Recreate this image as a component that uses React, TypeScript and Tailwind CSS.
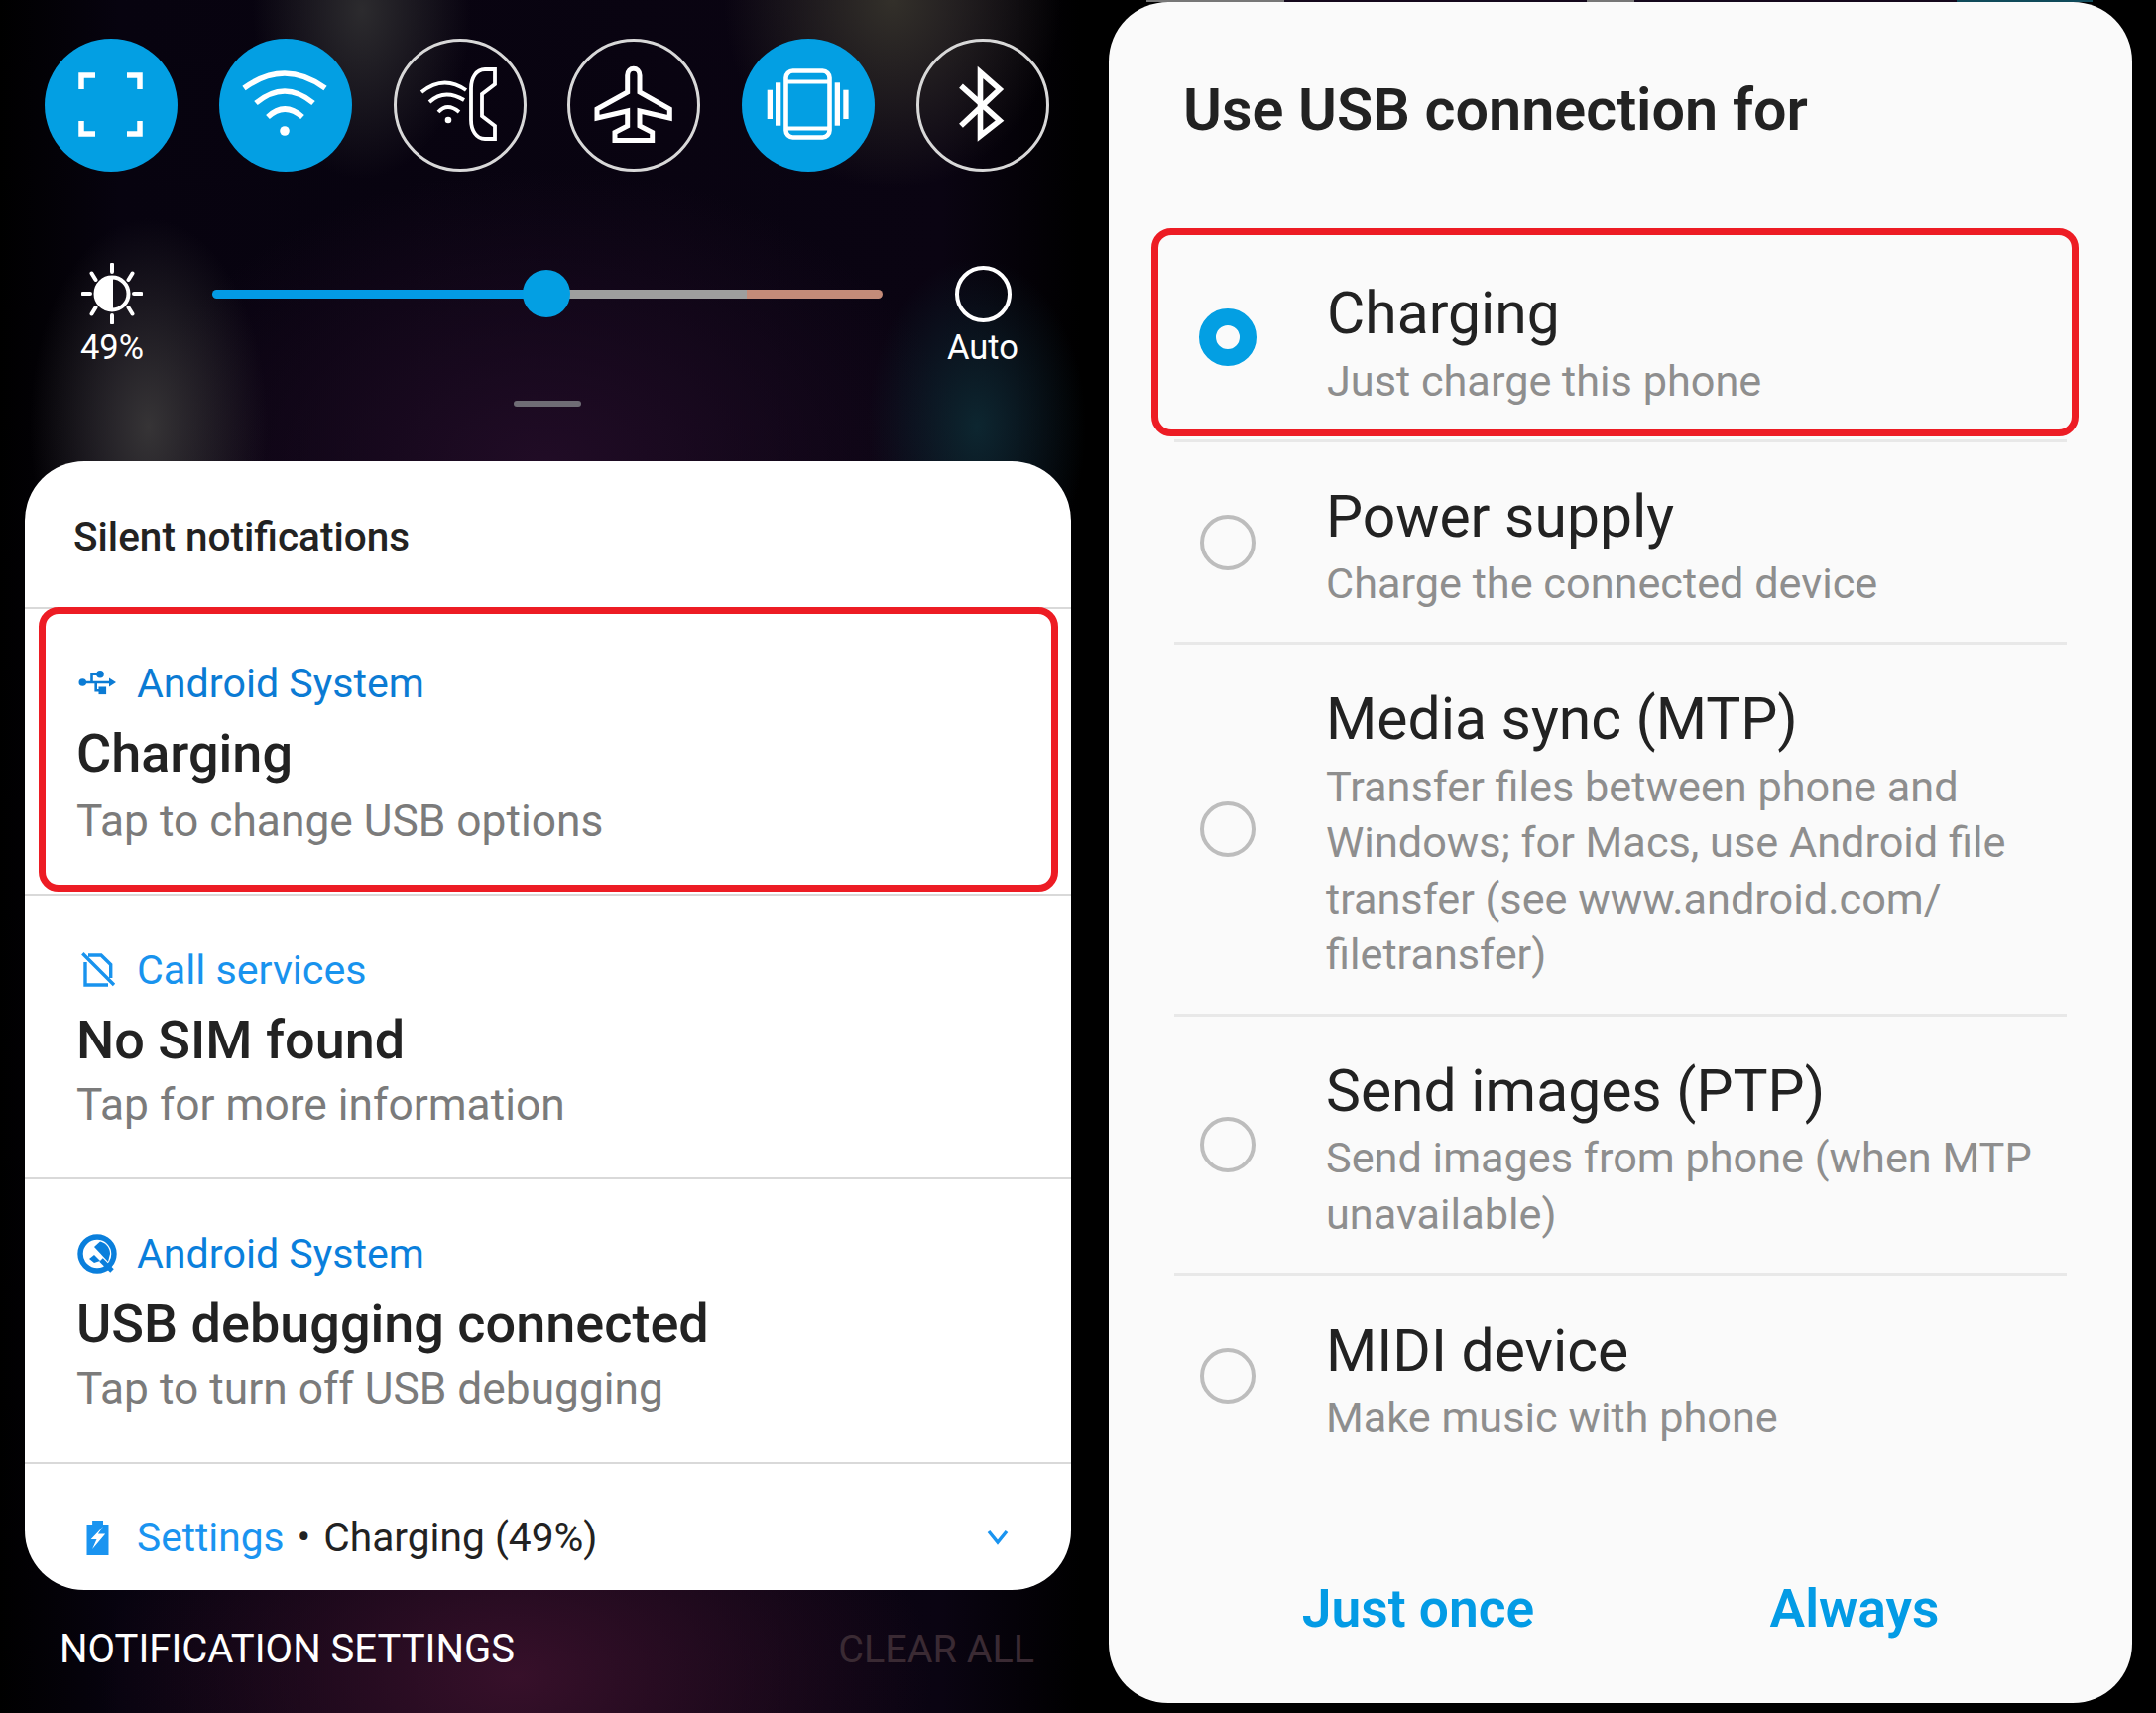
function ToggleCircle({ active, children }: { active?: boolean; children: React.ReactNode }) {
  return (
    <div
      className={
        active
          ? "h-[134px] w-[134px] rounded-full bg-[#039fe3]"
          : "h-[134px] w-[134px] rounded-full border-[3px] border-[#d8d8d8]"
      }
    >
      <svg
        viewBox="0 0 134 134"
        className={active ? "h-[134px] w-[134px]" : "-m-[3px] h-[134px] w-[134px]"}
        fill="none"
        stroke="#fff"
      >
        {children}
      </svg>
    </div>
  );
}

function Toggles() {
  return (
    <div className="ml-[45px] flex w-[1013px] justify-between pt-[39px]">
      <ToggleCircle active>
        <path
          d="M37 51V37H51M83 37H96V51M37 83V96H51M83 96H96V83"
          strokeWidth="5.5"
        />
      </ToggleCircle>
      <ToggleCircle active>
        <g strokeWidth="5.5">
          <path d="M25 50Q66 20 107 50" />
          <path d="M37 65Q66 41 95 65" />
          <path d="M49 79Q66 63 84 79" />
        </g>
        <circle cx="66" cy="93" r="4.8" fill="#fff" stroke="none" />
      </ToggleCircle>
      <ToggleCircle>
        <g strokeWidth="3.8">
          <path d="M28 54Q50 36 73 52" />
          <path d="M36 64Q51 50 71 62" />
          <path d="M45 74Q54 64 66 74" />
          <path d="M102 31H92C83 31 78 40 78 50V82C78 92 83 101 92 101H102V88L89 78V56L102 46Z" />
        </g>
        <circle cx="55" cy="82" r="3.3" fill="#fff" stroke="none" />
      </ToggleCircle>
      <ToggleCircle>
        <path
          d="M60.7 54L30 71V80L60.7 73V88L48 94.5V102.5H85.7V94.5L73 88V73L103.3 80V71L73 54V37C73 28 60.7 28 60.7 37Z"
          strokeWidth="5"
        />
      </ToggleCircle>
      <ToggleCircle active>
        <rect x="44.5" y="32.5" width="44" height="67" rx="7" strokeWidth="4.6" />
        <path d="M44 43.5H89M44 90.5H89" strokeWidth="4" />
        <g fill="#fff" stroke="none">
          <rect x="25.7" y="51.7" width="5.3" height="29.3" />
          <rect x="34" y="44.3" width="5.3" height="43.4" />
          <rect x="93.7" y="44.3" width="5.3" height="43.4" />
          <rect x="102.3" y="51.7" width="5.3" height="29.3" />
        </g>
      </ToggleCircle>
      <ToggleCircle>
        <path d="M45 47.7L84 82.7L64.5 98V34L84 51L45 87.7" strokeWidth="5.6" />
      </ToggleCircle>
    </div>
  );
}

function SunIcon() {
  return (
    <svg viewBox="0 0 62 62" className="h-[62px] w-[62px]" fill="none" stroke="#fff">
      <circle cx="31" cy="31" r="16.5" strokeWidth="4" />
      <path d="M31 14.5A16.5 16.5 0 0 0 31 47.5Z" fill="#fff" strokeWidth="2" />
      <path
        d="M31 1.5V9M31 53V60.5M1.5 31H9M53 31H60.5M10.5 10.5L14.5 17M51.5 10.5L47.5 17M10.5 51.5L14.5 45M51.5 51.5L47.5 45"
        strokeWidth="4"
        strokeLinecap="round"
      />
    </svg>
  );
}

function Brightness() {
  return (
    <div className="ml-[63px] mt-[92px] flex text-white">
      <div className="flex w-[100px] flex-col items-center">
        <SunIcon />
        <span className="text-[34.5px] leading-[46px]">49%</span>
      </div>
      <div className="relative ml-[51px] flex h-[62px] w-[676px] items-center">
        <div className="flex h-[9px] w-full overflow-hidden rounded-full">
          <div className="w-[337px] bg-[#039be5]" />
          <div className="w-[202px] bg-[#9e9e9e]" />
          <div className="flex-1 bg-[#c48b79]" />
        </div>
        <div className="absolute left-[313px] top-[7px] h-[48px] w-[48px] rounded-full bg-[#039fe3]" />
      </div>
      <div className="ml-[51px] flex w-[100px] flex-col items-center">
        <div className="flex h-[62px] items-center">
          <div className="h-[57px] w-[57px] rounded-full border-[4px] border-white" />
        </div>
        <span className="text-[34.5px] leading-[46px]">Auto</span>
      </div>
    </div>
  );
}

function UsbIcon() {
  return (
    <svg viewBox="0 0 44 44" className="h-[44px] w-[44px] shrink-0" fill="none" stroke="#0b7bd4">
      <path d="M7 21H36M16.5 21V12.7H25M20.7 21V29.3H27" strokeWidth="2.6" />
      <g fill="#0b7bd4" stroke="none">
        <circle cx="7.3" cy="21" r="3.8" />
        <circle cx="25" cy="12.7" r="3.8" />
        <rect x="23.5" y="25.5" width="7.6" height="7.6" />
        <path d="M34 16.5L41 21L34 25.5Z" />
      </g>
    </svg>
  );
}

function SimIcon() {
  return (
    <svg viewBox="0 0 44 44" className="h-[44px] w-[44px] shrink-0" fill="none" stroke="#1893ee" strokeWidth="3.4">
      <path d="M7.3 5.3L39 37M13 7H26L35.7 16.5V30M10 14V37H33" />
    </svg>
  );
}

function QIcon() {
  return (
    <svg viewBox="0 0 44 44" className="h-[44px] w-[44px] shrink-0" fill="none">
      <circle cx="22" cy="22" r="17" stroke="#0a7fdc" strokeWidth="5.4" />
      <path d="M19 15L25 9.5C31 11 35 16 35 22L33 30Z" fill="#0a7fdc" />
      <path d="M14 27L19 23L25 29L19 31Z" fill="#0a7fdc" />
      <path d="M26 28L37 39" stroke="#0a7fdc" strokeWidth="5" />
    </svg>
  );
}

function BatteryIcon() {
  return (
    <svg viewBox="0 0 44 44" className="h-[44px] w-[44px] shrink-0">
      <path d="M17.1 5H28V9H33.5V40H11.5V9H17.1Z" fill="#1a94f0" />
      <path d="M28 11L15.7 24H21.5L17.1 34L30.2 18.5H22.9Z" fill="#fff" />
    </svg>
  );
}

type NotificationRow = {
  icon: React.ReactNode;
  app: string;
  appColor: string;
  title: string;
  body: string;
  height: string;
  bodyGap?: string;
  highlight?: boolean;
};

const rows: NotificationRow[] = [
  {
    icon: <UsbIcon />,
    app: "Android System",
    appColor: "text-[#0b7bd4]",
    title: "Charging",
    body: "Tap to change USB options",
    height: "h-[289px] pt-[50px]",
    bodyGap: "mt-[3px]",
    highlight: true,
  },
  {
    icon: <SimIcon />,
    app: "Call services",
    appColor: "text-[#1893ee]",
    title: "No SIM found",
    body: "Tap for more information",
    height: "h-[286px] pt-[50px]",
  },
  {
    icon: <QIcon />,
    app: "Android System",
    appColor: "text-[#0a7fdc]",
    title: "USB debugging connected",
    body: "Tap to turn off USB debugging",
    height: "h-[287px] pt-[50px]",
  },
];

function NotificationCard() {
  return (
    <div className="ml-[25px] mt-[55px] flex h-[1138px] w-[1055px] flex-col overflow-hidden rounded-[60px] bg-white">
      <div className="flex h-[147px] items-start pl-[49px] pt-[52px] text-[40.5px] font-medium leading-[48px] text-[#222222]">
        Silent notifications
      </div>
      {rows.map((row) => (
        <div key={row.title} className={`relative border-t-2 border-[#d9d9d9] pl-[51px] ${row.height}`}>
          <div className="flex h-[50px] items-center">
            {row.icon}
            <span className={`ml-[18px] text-[41.2px] leading-[50px] ${row.appColor}`}>{row.app}</span>
          </div>
          <div className="mt-[13px] pl-[1px] text-[54px] font-medium leading-[66px] text-[#222222]">{row.title}</div>
          <div className={`pl-[1px] text-[44.3px] leading-[64px] text-[#7b7b7b] ${row.bodyGap ?? ""}`}>{row.body}</div>
          {row.highlight && (
            <div className="absolute -top-[2px] bottom-[2px] left-[14px] right-[13px] rounded-[20px] border-[7px] border-[#ed1c24]" />
          )}
        </div>
      ))}
      <div className="flex flex-1 items-center border-t-2 border-[#d9d9d9] pl-[51px] pr-[62px] pt-[20px] text-[40.7px] leading-[50px]">
        <BatteryIcon />
        <span className="ml-[18px] text-[#1a94f0]">Settings</span>
        <span className="ml-[13px] text-[#222222]">•</span>
        <span className="ml-[13px] text-[#222222]">Charging (49%)</span>
        <svg viewBox="0 0 24 16" className="ml-auto h-[16px] w-[24px]" fill="none" stroke="#1a94f0" strokeWidth="3.4">
          <path d="M3 2L12 13L21 2" />
        </svg>
      </div>
    </div>
  );
}

function LeftScreen() {
  return (
    <div className="h-[1727px] w-[1100px] shrink-0 bg-[radial-gradient(ellipse_120px_210px_at_150px_430px,#363436,transparent),radial-gradient(ellipse_110px_170px_at_365px_10px,#2c2b2e,transparent),radial-gradient(ellipse_170px_190px_at_900px_0px,#33302a,transparent),radial-gradient(ellipse_110px_170px_at_985px_430px,#0d2630,transparent),radial-gradient(ellipse_420px_260px_at_520px_1690px,#37102a,transparent),radial-gradient(ellipse_420px_300px_at_550px_470px,#210c26,transparent),linear-gradient(to_right,#000000_0px,#07030f_120px,#0a0412_950px,#000000_1090px)]">
      <Toggles />
      <Brightness />
      <div className="ml-[518px] mt-[31px] h-[6px] w-[68px] rounded-full bg-[#6f6d75]" />
      <NotificationCard />
      <div className="ml-[60px] mt-[35px] flex h-[50px] w-[983px] items-center justify-between">
        <span className="text-[40px] text-white">NOTIFICATION SETTINGS</span>
        <span className="text-[39.5px] text-[#3a2a33]">CLEAR ALL</span>
      </div>
    </div>
  );
}

type UsbOption = {
  title: string;
  lines: string[];
  selected?: boolean;
  last?: boolean;
};

const options: UsbOption[] = [
  { title: "Charging", lines: ["Just charge this phone"], selected: true },
  { title: "Power supply", lines: ["Charge the connected device"] },
  {
    title: "Media sync (MTP)",
    lines: [
      "Transfer files between phone and",
      "Windows; for Macs, use Android file",
      "transfer (see www.android.com/",
      "filetransfer)",
    ],
  },
  { title: "Send images (PTP)", lines: ["Send images from phone (when MTP", "unavailable)"] },
  { title: "MIDI device", lines: ["Make music with phone"], last: true },
];

function OptionRow({ option }: { option: UsbOption }) {
  return (
    <div
      className={`relative flex items-center pb-[29.5px] ${
        option.last ? "pt-[41px]" : "border-b-[3px] border-[#e8e8e8] pt-[40px]"
      }`}
    >
      {option.selected ? (
        <div className="-mt-[14px] ml-[25px] h-[58px] w-[58px] shrink-0 rounded-full border-[17px] border-[#039fe3] bg-[#fafafa]" />
      ) : (
        <div
          className={`ml-[26px] h-[56px] w-[56px] shrink-0 rounded-full border-[4px] border-[#bdbdbd] ${
            option.last ? "-mt-[12px]" : "-mt-[10px]"
          }`}
        />
      )}
      <div className="ml-[71px]">
        <div className="text-[58.8px] leading-[70px] text-[#222222]">{option.title}</div>
        <div className="mt-[5.5px] text-[43.25px] leading-[56.6px] text-[#8e8e8e]">
          {option.lines.map((line) => (
            <div key={line}>{line}</div>
          ))}
        </div>
      </div>
      {option.selected && (
        <div className="absolute -left-[23px] -right-[12px] -top-[11px] bottom-[3px] rounded-[20px] border-[7px] border-[#ed1c24]" />
      )}
    </div>
  );
}

function UsbDialog() {
  return (
    <div className="ml-[18px] flex h-[1715px] w-[1032px] flex-col rounded-[60px] bg-[#fafafa]">
      <div className="h-[239px] pl-[75px] pt-[73px] text-[59.3px] font-semibold leading-[72px] text-[#222222]">
        Use USB connection for
      </div>
      <div className="mx-[66px]">
        {options.map((option) => (
          <OptionRow key={option.title} option={option} />
        ))}
      </div>
      <div className="mb-[65px] ml-[92px] mr-[60px] mt-auto grid grid-cols-2 text-center text-[53.3px] font-semibold leading-[60px] text-[#039be5]">
        <span>Just once</span>
        <span>Always</span>
      </div>
    </div>
  );
}

export default function App() {
  return (
    <div className="flex h-[1727px] w-[2174px] overflow-hidden bg-black font-['Roboto',sans-serif]">
      <LeftScreen />
      <div className="h-[1727px] flex-1">
        <div className="h-[2px] bg-[linear-gradient(to_right,#000000_56px,#777777_56px,#777777_195px,#14081c_195px,#14081c_500px,#777777_500px,#777777_548px,#14081c_548px,#14081c_873px,#0f4a5a_873px,#0f4a5a_1010px,#000000_1010px)]" />
        <UsbDialog />
      </div>
    </div>
  );
}
